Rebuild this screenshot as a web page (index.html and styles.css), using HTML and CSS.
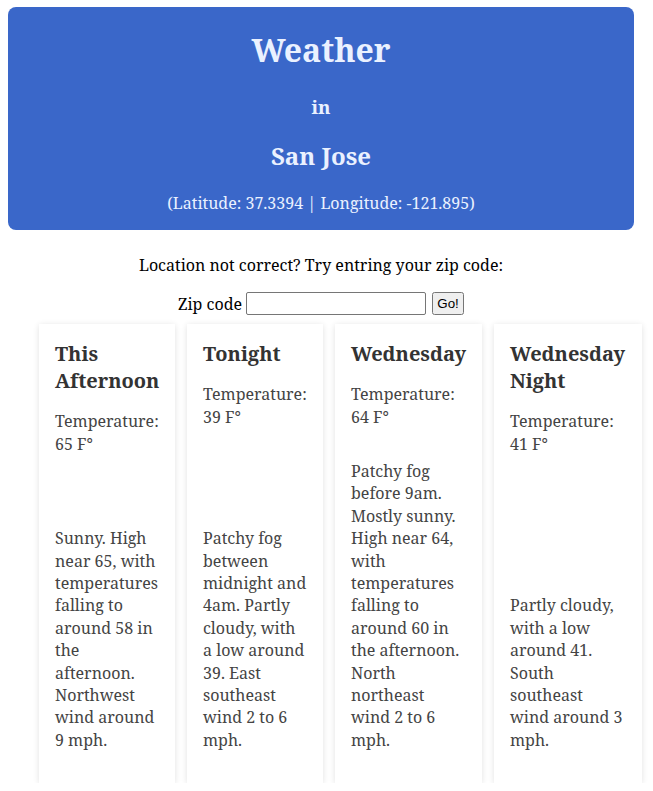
FILE: index.html
```html
<!DOCTYPE html>
<html lang="en">
<head>
<meta charset="utf-8">
<title>Weather in San Jose</title>
<link rel="stylesheet" href="styles.css">
</head>
<body>
<div class="page">
  <header class="banner">
    <h1 class="banner-title">Weather</h1>
    <h3 class="banner-in">in</h3>
    <h2 class="banner-city">San Jose</h2>
    <p class="banner-coords">(Latitude: 37.3394 | Longitude: -121.895)</p>
  </header>

  <p class="zip-prompt">Location not correct? Try entring your zip code:</p>
  <form class="zip-form">
    <label class="zip-label" for="zip">Zip code</label>
    <input class="zip-input" id="zip" type="text">
    <button class="zip-button" type="button">Go!</button>
  </form>

  <div class="cards">
    <div class="card">
      <h3 class="card-title">This Afternoon</h3>
      <p class="card-temp">Temperature: 65 F°</p>
      <p class="card-desc">Sunny. High near 65, with temperatures falling to around 58 in the afternoon. Northwest wind around 9 mph.</p>
    </div>
    <div class="card">
      <h3 class="card-title">Tonight</h3>
      <p class="card-temp">Temperature: 39 F°</p>
      <p class="card-desc">Patchy fog between midnight and 4am. Partly cloudy, with a low around 39. East southeast wind 2 to 6 mph.</p>
    </div>
    <div class="card card-wide">
      <h3 class="card-title">Wednesday</h3>
      <p class="card-temp">Temperature: 64 F°</p>
      <p class="card-desc">Patchy fog before 9am. Mostly sunny. High near 64, with temperatures falling to around 60 in the afternoon. North northeast wind 2 to 6 mph.</p>
    </div>
    <div class="card card-wider">
      <h3 class="card-title">Wednesday Night</h3>
      <p class="card-temp">Temperature: 41 F°</p>
      <p class="card-desc">Partly cloudy, with a low around 41. South southeast wind around 3 mph.</p>
    </div>
  </div>
</div>
</body>
</html>
```

FILE: styles.css
```css
html, body {
  margin: 0;
  padding: 0;
}

body {
  font-family: "Noto Serif", "Droid Serif", serif;
  font-size: 16px;
  color: #000;
  background: #fff;
}

.page {
  width: 626px;
  padding: 7px 0 0 8px;
}

.banner {
  background: #3a67c9;
  color: #eaf1ff;
  border-radius: 8px;
  text-align: center;
  padding: 0.1px 0;
}

.banner-title {
  font-size: 32px;
  margin: 21px 0;
}

.banner-in {
  font-size: 18.72px;
  margin: 23px 0 19px;
}

.banner-city {
  font-size: 24px;
  margin: 20px 0;
}

.banner-coords {
  margin: 16px 0;
}

.zip-prompt {
  text-align: center;
  margin: 24px 0 0;
  line-height: 22px;
}

.zip-form {
  display: flex;
  justify-content: center;
  align-items: center;
  gap: 4px;
  margin-top: 16px;
}

.zip-label {
  line-height: 22px;
}

.zip-input {
  width: 180px;
  height: 23px;
  box-sizing: border-box;
  border: 1px solid #767676;
  border-radius: 2px;
  padding: 1px 2px;
  margin: 0;
}

.zip-button {
  margin: 0 0 0 2px;
  width: 32px;
  height: 23px;
  box-sizing: border-box;
  padding: 0;
  font-size: 13.33px;
}

.cards {
  display: flex;
  align-items: stretch;
  gap: 12px;
  margin-top: 9px;
  padding-left: 31px;
}

.card {
  width: 136px;
  flex: none;
  box-sizing: border-box;
  padding: 16px;
  display: flex;
  flex-direction: column;
  background: #fff;
  box-shadow: 0 1px 6px rgba(0, 0, 0, 0.12);
  color: #444;
  line-height: 22.4px;
}

.card-wide {
  width: 147px;
}

.card-wider {
  width: 148px;
}

.card-title {
  margin: 0;
  font-size: 20px;
  line-height: 27px;
  color: #333;
}

.card-temp {
  margin: 16px 0;
}

.card-desc {
  margin: auto 0 16px;
  padding-top: 16px;
}
```
